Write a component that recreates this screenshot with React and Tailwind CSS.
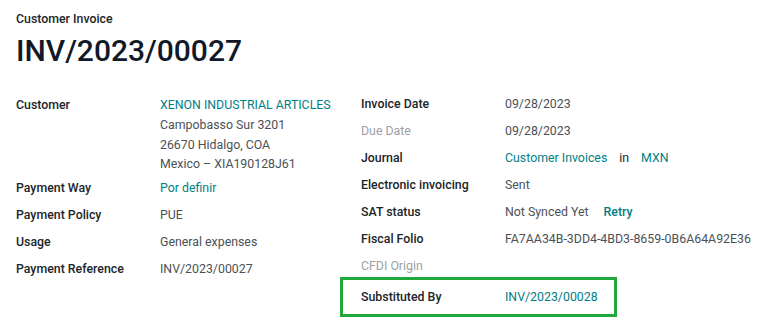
export default function App() {
  const Row = ({ label, children, faded, className = "" }) => (
    <div className={"flex h-[27px] items-center whitespace-nowrap " + className}>
      <div className={"w-[144px] shrink-0 " + (faded ? "text-[#9a9fa5]" : "font-medium text-[#212529]")}>{label}</div>
      <div className="text-[#4b5157]">{children}</div>
    </div>
  );
  const link = "text-[#017e84]";
  return (
    <div className="w-[768px] h-[325px] bg-white text-[12.35px] leading-[20px] overflow-hidden" style={{ fontFamily: "Roboto, 'Liberation Sans', sans-serif" }}>
      <div className="px-4 pt-[9px]">
        <div className="font-medium text-[#212529]">Customer Invoice</div>
        <div className="mt-[4px] text-[30px] leading-[36px] font-medium text-[#111827]">INV/2023/00027</div>
      </div>
      <div className="flex px-4 mt-[26px]">
        <div className="w-[345px] shrink-0">
          <div className="flex">
            <div className="w-[144px] shrink-0 font-medium text-[#212529] leading-[20px]">Customer</div>
            <div className="text-[#4b5157]">
              <div className={link}>XENON INDUSTRIAL ARTICLES</div>
              <div className="leading-[19.5px] mt-[1px]">Campobasso Sur 3201</div>
              <div className="leading-[19.5px]">26670 Hidalgo, COA</div>
              <div className="leading-[19.5px]">Mexico – XIA190128J61</div>
            </div>
          </div>
          <Row label="Payment Way"><span className={link}>Por definir</span></Row>
          <Row label="Payment Policy">PUE</Row>
          <Row label="Usage">General expenses</Row>
          <Row label="Payment Reference">INV/2023/00027</Row>
        </div>
        <div className="flex-1 -mt-[4.5px]">
          <Row label="Invoice Date">09/28/2023</Row>
          <Row label="Due Date" faded>09/28/2023</Row>
          <Row label="Journal">
            <span className={link}>Customer Invoices</span>
            <span className="text-[#212529] mx-[12px]">in</span>
            <span className={link}>MXN</span>
          </Row>
          <Row label="Electronic invoicing">Sent</Row>
          <Row label="SAT status">
            Not Synced Yet<span className={"ml-[15px] font-medium " + link}>Retry</span>
          </Row>
          <Row label="Fiscal Folio">FA7AA34B-3DD4-4BD3-8659-0B6A64A92E36</Row>
          <Row label="CFDI Origin" faded></Row>
          <div className="-ml-[21px] w-[277px] h-[40px] border-[3px] border-[#20a83d] flex items-center pl-[18px] mt-[-3px] whitespace-nowrap">
            <div className="w-[144px] shrink-0 font-medium text-[#212529]">Substituted By</div>
            <div className={link}>INV/2023/00028</div>
          </div>
        </div>
      </div>
    </div>
  );
}
